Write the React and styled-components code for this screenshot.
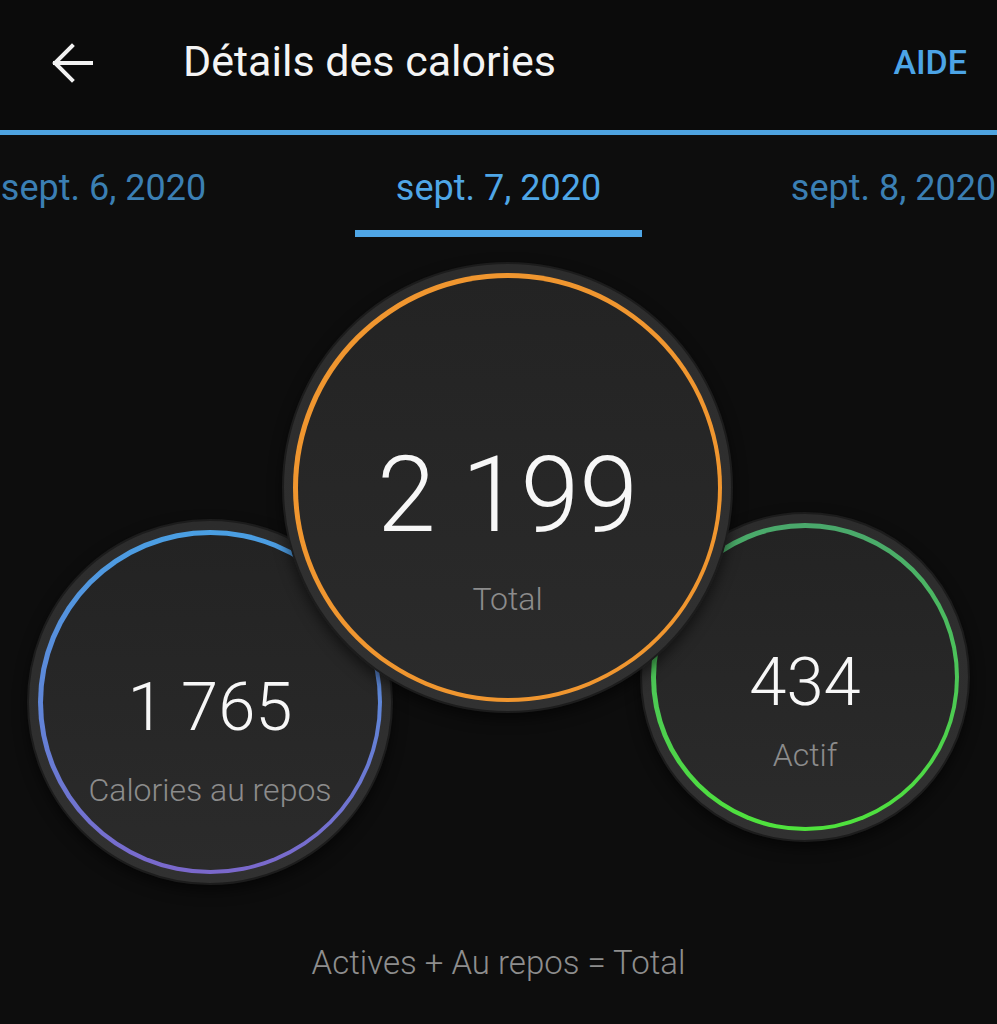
import React from 'react'
import styled, { createGlobalStyle } from 'styled-components'

const GlobalStyle = createGlobalStyle`
  html, body {
    margin: 0;
    padding: 0;
    background: #0d0d0d;
  }
  body {
    font-family: Roboto, "Noto Sans", "Liberation Sans", sans-serif;
    color: #f2f2f2;
  }
`

const bubbles = [
  {
    key: 'rest',
    value: '1 765',
    label: 'Calories au repos',
    size: 366,
    x: 27,
    y: 280,
    ring: ['#4a9fe3', '#5f86d8', '#7b68cc'],
    valueSize: 67,
    labelSize: 32,
    labelGap: 26,
    shift: 76,
  },
  {
    key: 'active',
    value: '434',
    label: 'Actif',
    size: 330,
    x: 640,
    y: 273,
    ring: ['#4aa86c', '#4cc657', '#4fe33c'],
    valueSize: 67,
    labelSize: 32,
    labelGap: 16,
    shift: 66,
  },
  {
    key: 'total',
    value: '2 199',
    label: 'Total',
    size: 451,
    x: 282,
    y: 23,
    ring: ['#f0962f', '#f0962f', '#f0962f'],
    valueSize: 106,
    labelSize: 32,
    labelGap: 27,
    shift: 80,
  },
]

export default function App() {
  return (
    <Screen>
      <GlobalStyle />
      <Header>
        <BackButton aria-label="Retour">
          <svg width="44" height="40" viewBox="0 0 44 40" fill="none">
            <path
              d="M41 20H5M22 3L5 20l17 17"
              stroke="#f2f2f2"
              strokeWidth="4"
              strokeLinecap="square"
            />
          </svg>
        </BackButton>
        <Title>Détails des calories</Title>
        <HelpLink>AIDE</HelpLink>
      </Header>
      <Divider />
      <Tabs>
        <Tab>sept. 6, 2020</Tab>
        <Tab $active>sept. 7, 2020</Tab>
        <Tab>sept. 8, 2020</Tab>
      </Tabs>
      <BubbleArea>
        {bubbles.map((b) => (
          <Bubble
            key={b.key}
            $size={b.size}
            style={{ left: b.x, top: b.y }}
          >
            <Ring $colors={b.ring}>
              <Face $shift={b.shift}>
                <Value $size={b.valueSize}>{b.value}</Value>
                <Label $size={b.labelSize} $gap={b.labelGap}>
                  {b.label}
                </Label>
              </Face>
            </Ring>
          </Bubble>
        ))}
      </BubbleArea>
      <Caption>Actives + Au repos = Total</Caption>
    </Screen>
  )
}

const Screen = styled.div`
  width: 997px;
  height: 1024px;
  overflow: hidden;
  background: #0d0d0d;
`

const Header = styled.div`
  height: 130px;
  display: flex;
  align-items: center;
  padding: 0 30px 0 50px;
  background: #0b0b0b;
`

const BackButton = styled.div`
  width: 44px;
  height: 40px;
  display: flex;
  margin-top: -4px;
`

const Title = styled.div`
  flex: 1;
  margin-left: 89px;
  font-size: 43px;
  font-weight: 400;
  color: #f4f4f4;
  margin-top: -8px;
`

const HelpLink = styled.div`
  font-size: 34px;
  font-weight: 500;
  color: #4ca4e6;
  margin-top: -6px;
`

const Divider = styled.div`
  height: 5px;
  background: #4ea3e0;
`

const Tabs = styled.div`
  display: flex;
  justify-content: center;
  gap: 108px;
  height: 104px;
  overflow: hidden;
`

const Tab = styled.div`
  flex: 0 0 287px;
  display: flex;
  align-items: center;
  justify-content: center;
  box-sizing: border-box;
  padding-top: 10px;
  font-size: 36px;
  color: ${(p) => (p.$active ? '#4fa6e6' : '#3b7fb3')};
  border-bottom: 7px solid ${(p) => (p.$active ? '#4fa6e6' : 'transparent')};
  margin-bottom: 2px;
`

const BubbleArea = styled.div`
  position: relative;
  height: 658px;
`

const Bubble = styled.div`
  position: absolute;
  width: ${(p) => p.$size}px;
  height: ${(p) => p.$size}px;
  box-sizing: border-box;
  border-radius: 50%;
  padding: 9px;
  background: linear-gradient(#2c2c2c, #313131);
  border: 2px solid #1c1c1c;
  box-shadow: 0 6px 14px rgba(0, 0, 0, 0.55);
  display: flex;
`

const Ring = styled.div`
  flex: 1;
  border-radius: 50%;
  padding: 4.5px;
  background: linear-gradient(
    ${(p) => p.$colors[0]},
    ${(p) => p.$colors[1]},
    ${(p) => p.$colors[2]}
  );
  display: flex;
`

const Face = styled.div`
  flex: 1;
  box-sizing: border-box;
  border-radius: 50%;
  padding-top: ${(p) => p.$shift}px;
  background: linear-gradient(#232323, #2b2b2b);
  display: flex;
  flex-direction: column;
  align-items: center;
  justify-content: center;
`

const Value = styled.div`
  font-size: ${(p) => p.$size}px;
  font-weight: 300;
  color: #f7f7f7;
  line-height: 1.1;
`

const Label = styled.div`
  font-size: ${(p) => p.$size}px;
  font-weight: 300;
  color: #8c8c8c;
  margin-top: ${(p) => p.$gap}px;
`

const Caption = styled.div`
  margin-top: 46px;
  text-align: center;
  font-size: 33px;
  font-weight: 300;
  color: #8e8e8e;
`
